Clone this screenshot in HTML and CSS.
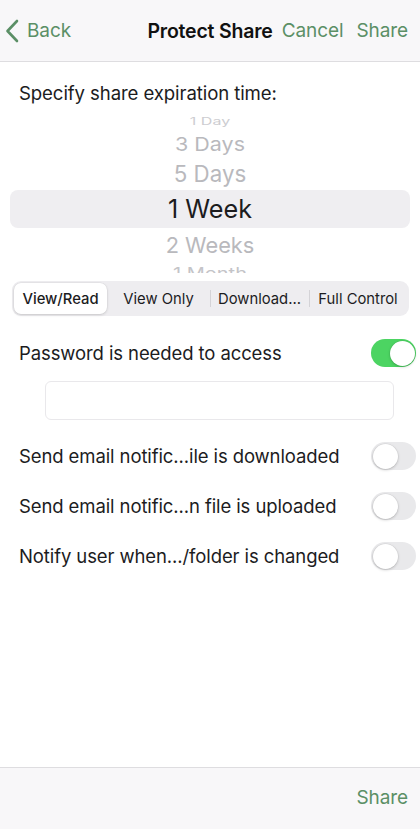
FILE: index.html
```html
<!DOCTYPE html>
<html>
<head>
<meta charset="utf-8">
<link rel="stylesheet" href="styles.css">
</head>
<body>
<div class="screen">
  <header class="navbar">
    <div class="nav-left">
      <svg class="chevron" width="14" height="24" viewBox="0 0 14 24"><path d="M12 2 L2.5 12 L12 22" fill="none" stroke="#5b8f66" stroke-width="2.6" stroke-linecap="round" stroke-linejoin="round"/></svg>
      <span class="nav-link">Back</span>
    </div>
    <div class="nav-title">Protect Share</div>
    <div class="nav-right">
      <span class="nav-link">Cancel</span>
      <span class="nav-link">Share</span>
    </div>
  </header>

  <main class="content">
    <div class="section-label">Specify share expiration time:</div>

    <div class="picker">
      <div class="pick pick-far">1 Day</div>
      <div class="pick pick-near2">3 Days</div>
      <div class="pick pick-near1">5 Days</div>
      <div class="pick pick-selected"><span>1 Week</span></div>
      <div class="pick pick-after1">2 Weeks</div>
      <div class="pick pick-after2">1 Month</div>
    </div>

    <div class="segmented">
      <div class="seg seg-active">View/Read</div>
      <div class="seg">View Only</div>
      <div class="seg seg-div">Download...</div>
      <div class="seg seg-div">Full Control</div>
    </div>

    <div class="row row-first">
      <span class="row-label">Password is needed to access</span>
      <span class="toggle toggle-on"><span class="knob"></span></span>
    </div>

    <div class="field-wrap"><div class="text-field"></div></div>

    <div class="row row-opt">
      <span class="row-label">Send email notific...ile is downloaded</span>
      <span class="toggle"><span class="knob"></span></span>
    </div>
    <div class="row row-opt">
      <span class="row-label">Send email notific...n file is uploaded</span>
      <span class="toggle"><span class="knob"></span></span>
    </div>
    <div class="row row-opt">
      <span class="row-label">Notify user when.../folder is changed</span>
      <span class="toggle"><span class="knob"></span></span>
    </div>
  </main>

  <footer class="toolbar">
    <span class="nav-link">Share</span>
  </footer>
</div>
</body>
</html>
```

FILE: styles.css
```css
* { box-sizing: border-box; }
html, body { margin: 0; padding: 0; }
body {
  font-family: Inter, "Noto Sans", "Liberation Sans", sans-serif;
  background: #ffffff;
  color: #1c1c1e;
}
.screen {
  width: 420px;
  height: 829px;
  display: flex;
  flex-direction: column;
  overflow: hidden;
}
.navbar {
  height: 62px;
  flex: none;
  background: #f8f7f9;
  border-bottom: 1px solid #dedde0;
  display: grid;
  grid-template-columns: 1fr auto 1fr;
  align-items: center;
  padding: 0 12px;
}
.nav-left { display: flex; align-items: center; gap: 8px; margin-left: -7px; }
.chevron { display: block; }
.nav-link {
  color: #5b8f66;
  font-size: 19px;
  letter-spacing: -0.1px;
}
.nav-title {
  font-size: 19.5px;
  font-weight: 600;
  color: #111;
  letter-spacing: -0.2px;
}
.nav-right {
  display: flex;
  justify-content: flex-end;
  gap: 13px;
}
.content {
  flex: 1;
  display: flex;
  flex-direction: column;
}
.section-label {
  font-size: 18.6px;
  padding: 20px 19px 0;
  height: 50px;
  letter-spacing: -0.1px;
}
.picker {
  height: 161px;
  overflow: hidden;
  display: flex;
  flex-direction: column;
  align-items: center;
}
.pick {
  width: 100%;
  display: flex;
  align-items: center;
  justify-content: center;
  color: #b9b9bd;
  flex: none;
}
.pick-far {
  height: 18px;
  font-size: 16px;
  color: #cdcdd1;
  transform: scaleY(0.62);
}
.pick-near2 { height: 27px; font-size: 21.5px; transform: scaleY(0.88); }
.pick-near1 { height: 33px; font-size: 22.3px; }
.pick-selected {
  height: 38px;
  padding: 0 10px;
}
.pick-selected span {
  display: flex;
  align-items: center;
  justify-content: center;
  width: 100%;
  height: 100%;
  background: #efeef1;
  border-radius: 8px;
  font-size: 25.2px;
  color: #1c1c1e;
}
.pick-after1 { height: 34px; font-size: 21.8px; }
.pick-after2 { height: 22px; font-size: 20px; transform: scaleY(0.8); color: #c4c4c8; }
.segmented {
  margin: 8px 11px 0 12px;
  height: 35px;
  background: #eeedf0;
  border-radius: 9px;
  padding: 2px;
  display: grid;
  grid-template-columns: 93px 103px 99px 1fr;
  flex: none;
}
.seg {
  display: flex;
  align-items: center;
  justify-content: center;
  font-size: 14.8px;
  color: #1c1c1e;
  position: relative;
}
.seg-div::before {
  content: "";
  position: absolute;
  left: 0;
  top: 7px;
  bottom: 7px;
  width: 1px;
  background: #d4d3d7;
}
.seg-active {
  background: #ffffff;
  border-radius: 7px;
  box-shadow: 0 1px 3px rgba(0,0,0,0.14), 0 0 0 0.5px rgba(0,0,0,0.05);
  font-weight: 500;
}
.row {
  display: flex;
  align-items: center;
  justify-content: space-between;
  padding: 0 4px 0 19px;
  flex: none;
}
.row-first { height: 52px; margin-top: 11px; }
.row-opt { height: 50px; }
.row-label {
  font-size: 18.5px;
  letter-spacing: -0.1px;
  color: #1c1c1e;
}
.field-wrap {
  padding: 2px 26px 11px 45px;
  flex: none;
}
.text-field {
  height: 39px;
  border: 1px solid #e9e8eb;
  border-radius: 6px;
  background: #fff;
}
.toggle {
  width: 45px;
  height: 28px;
  border-radius: 14px;
  background: #e9e9eb;
  position: relative;
  flex: none;
}
.toggle .knob {
  position: absolute;
  left: 1.5px;
  top: 1.5px;
  width: 25px;
  height: 25px;
  border-radius: 50%;
  background: #fff;
  box-shadow: 0 1px 3px rgba(0,0,0,0.2), 0 0 0 0.5px rgba(0,0,0,0.06);
}
.toggle-on { background: #4cd462; }
.toggle-on .knob { left: auto; right: 1.5px; }
.toolbar {
  height: 62px;
  flex: none;
  background: #f8f7f9;
  border-top: 1px solid #dedde0;
  display: flex;
  align-items: center;
  justify-content: flex-end;
  padding: 0 12px 2px;
}
```
